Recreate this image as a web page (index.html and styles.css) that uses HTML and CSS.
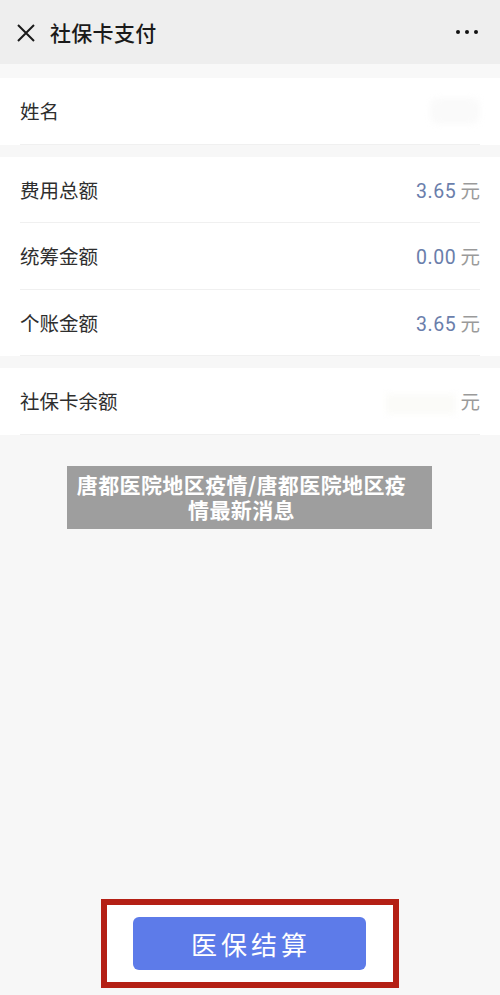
FILE: index.html
```html
<!DOCTYPE html>
<html lang="zh">
<head>
<meta charset="utf-8">
<link rel="stylesheet" href="styles.css">
</head>
<body>
<div class="page">
  <header class="nav">
    <svg class="close" width="20" height="20" viewBox="0 0 20 20"><path d="M2 2 L18 18 M18 2 L2 18" stroke="#1a1a1a" stroke-width="2" fill="none"/></svg>
    <div class="title">社保卡支付</div>
    <div class="more"><span></span><span></span><span></span></div>
  </header>
  <div class="gap-top"></div>
  <section class="card">
    <div class="row"><span class="label">姓名</span><span class="blur"></span></div>
  </section>
  <section class="card">
    <div class="row"><span class="label">费用总额</span><span class="value"><b>3.65</b> 元</span></div>
    <div class="row"><span class="label">统筹金额</span><span class="value"><b>0.00</b> 元</span></div>
    <div class="row"><span class="label">个账金额</span><span class="value"><b>3.65</b> 元</span></div>
  </section>
  <section class="card">
    <div class="row"><span class="label">社保卡余额</span><span class="value"><i class="blur2"></i> 元</span></div>
  </section>
  <div class="spacer"></div>
  <div class="footer">
    <div class="frame"><button class="pay">医保结算</button></div>
  </div>
  <div class="banner">唐都医院地区疫情/唐都医院地区疫情最新消息</div>
</div>
</body>
</html>
```
FILE: styles.css
```css
* { box-sizing: border-box; }
html, body { margin: 0; padding: 0; }
body {
  width: 500px;
  height: 995px;
  background: #f7f7f7;
  font-family: "Noto Sans CJK SC", "Noto Sans", sans-serif;
  overflow: hidden;
}
.page {
  position: relative;
  height: 995px;
  display: flex;
  flex-direction: column;
}
.nav {
  height: 64px;
  background: #eeeeee;
  display: flex;
  align-items: center;
  padding: 0 22px 0 16px;
}
.close { flex: none; margin-top: 2px; }
.title {
  margin-left: 14px;
  font-size: 21px;
  font-weight: 500;
  color: #1a1a1a;
  letter-spacing: 0.3px;
  flex: 1;
}
.more { display: flex; gap: 5px; }
.more span {
  width: 4px; height: 4px; border-radius: 50%;
  background: #111;
}
.gap-top { height: 14px; background: #f8f8f8; }
.card {
  background: #fff;
  padding: 0 20px;
  margin-bottom: 12px;
}
.row {
  height: 66.5px;
  display: flex;
  align-items: center;
  justify-content: space-between;
  border-bottom: 1px solid #f0f0f0;
}
.label {
  font-size: 19.5px;
  color: #2e2e2e;
}
.value {
  font-size: 19.5px;
  color: #9a9a9a;
}
.value b {
  font-weight: 400;
  color: #6a7eab;
  font-family: "Roboto", "Noto Sans", sans-serif;
  letter-spacing: 0.5px;
}
.blur {
  width: 50px; height: 26px;
  background: #fafafa;
  border-radius: 8px;
  filter: blur(3px);
}
.blur2 {
  display: inline-block;
  width: 70px; height: 20px;
  background: #fbfbf8;
  filter: blur(3px);
  vertical-align: middle;
}
.spacer { flex: 1; }
.footer {
  display: flex;
  justify-content: center;
  padding: 0 0 7px 0;
}
.frame {
  width: 298px;
  height: 89px;
  border: 6px solid #b42015;
  background: #fff;
  display: flex;
  justify-content: center;
  padding-top: 12px;
  padding-right: 24px;
  padding-left: 22px;
}
.pay {
  width: 233px;
  height: 53px;
  border: none;
  border-radius: 6px;
  background: #5d7be9;
  color: #fff;
  font-family: "Noto Sans CJK SC", sans-serif;
  font-size: 26px;
  letter-spacing: 4px;
  padding: 0 0 0 4px;
}
.banner {
  position: absolute;
  left: 67px;
  top: 466px;
  width: 365px;
  height: 63px;
  background: #9e9e9e;
  color: #fff;
  font-size: 21px;
  font-weight: 700;
  line-height: 25px;
  letter-spacing: 0.4px;
  text-align: center;
  padding: 6px 19px 0 3px;
}
```
